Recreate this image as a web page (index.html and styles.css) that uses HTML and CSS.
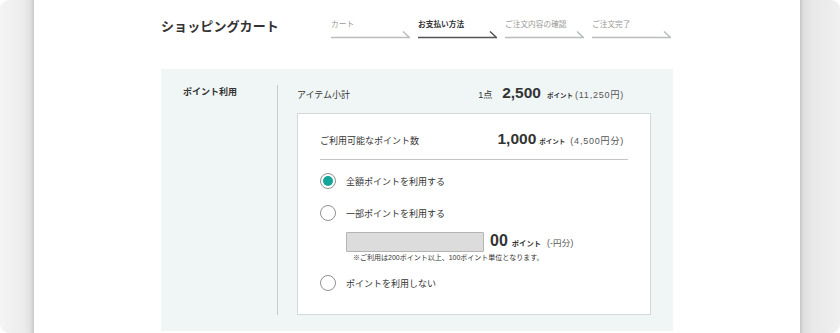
FILE: index.html
```html
<!DOCTYPE html>
<html lang="ja">
<head>
  <meta charset="UTF-8">
  <title>ショッピングカート</title>
  <meta name="viewport" content="width=device-width, initial-scale=1.0">
  <link rel="stylesheet" href="styles.css">
</head>
<body>
  <div class="frame">
    <div class="edge edge-left"></div>

    <main class="page">
      <header class="cart-header">
        <h1 class="cart-title">ショッピングカート</h1>
        <ol class="steps">
          <li class="step">
            <span>カート</span>
            <svg width="79" height="8" viewBox="0 0 79 8"><polyline points="0,6.5 78.5,6.5 72,0.5" /></svg>
          </li>
          <li class="step active">
            <span>お支払い方法</span>
            <svg width="79" height="8" viewBox="0 0 79 8"><polyline points="0,6.5 78.5,6.5 72,0.5" /></svg>
          </li>
          <li class="step">
            <span>ご注文内容の確認</span>
            <svg width="79" height="8" viewBox="0 0 79 8"><polyline points="0,6.5 78.5,6.5 72,0.5" /></svg>
          </li>
          <li class="step">
            <span>ご注文完了</span>
            <svg width="79" height="8" viewBox="0 0 79 8"><polyline points="0,6.5 78.5,6.5 72,0.5" /></svg>
          </li>
        </ol>
      </header>

      <section class="point-panel">
        <h2 class="point-label">ポイント利用</h2>
        <div class="point-body">
          <div class="subtotal">
            <span>アイテム小計</span>
            <span class="amount">
              <span class="count">1点</span>
              <span class="num">2,500</span>
              <span class="unit">ポイント</span>
              <span class="yen">(11,250円)</span>
            </span>
          </div>

          <div class="point-box">
            <div class="available">
              <span>ご利用可能なポイント数</span>
              <span class="amount">
                <span class="num">1,000</span>
                <span class="unit">ポイント</span>
                <span class="yen">(4,500円分)</span>
              </span>
            </div>

            <div class="options">
              <label class="option">
                <span class="radio checked"></span>
                全額ポイントを利用する
              </label>
              <label class="option">
                <span class="radio"></span>
                一部ポイントを利用する
              </label>
              <div class="partial">
                <div class="partial-row">
                  <input class="point-input" type="text">
                  <span class="num">00</span>
                  <span class="unit">ポイント</span>
                  <span class="yen">(-円分)</span>
                </div>
                <p class="note">※ご利用は200ポイント以上、100ポイント単位となります。</p>
              </div>
              <label class="option">
                <span class="radio"></span>
                ポイントを利用しない
              </label>
            </div>
          </div>
        </div>
      </section>
    </main>

    <div class="edge edge-right"></div>
  </div>
</body>
</html>
```

FILE: styles.css
```css
:root {
  --text: #333;
  --muted: #999;
  --panel: #f0f6f6;
  --line: #c9cccc;
  --teal: #13a59a;
}

* {
  box-sizing: border-box;
}

body {
  margin: 0;
  background: #fff;
  color: var(--text);
  font-family: "Liberation Sans", "Noto Sans CJK JP", sans-serif;
}

.frame {
  display: flex;
  height: 333px;
  overflow: hidden;
}

.edge {
  height: 333px;
}

.edge-left {
  width: 34px;
  border-radius: 9px 0 0 9px;
  background: linear-gradient(to right, #f4f4f4 0%, #ececec 70%, #e2e2e2 88%, #c9c9c9 100%);
}

.edge-right {
  width: 40px;
  border-radius: 0 9px 9px 0;
  background: linear-gradient(to right, #c4c4c4 0%, #dedede 8%, #e8e8e8 30%, #f0f0f0 100%);
}

.page {
  flex: 1;
  padding-left: 127px;
}

/* header */

.cart-header {
  display: flex;
  height: 69px;
}

.cart-title {
  width: 170px;
  margin: 17px 0 0;
  font-size: 13px;
  line-height: 20px;
  font-weight: bold;
  letter-spacing: 0.1px;
}

.steps {
  display: flex;
  gap: 8px;
  margin: 19px 0 0;
  padding: 0;
  list-style: none;
}

.step {
  display: flex;
  flex-direction: column;
  width: 79px;
  font-size: 7.7px;
  line-height: 12px;
  color: var(--muted);
}

.step svg {
  display: block;
}

.step polyline {
  fill: none;
  stroke: #b9bdbd;
  stroke-width: 1.5;
}

.step.active {
  color: var(--text);
  font-weight: bold;
}

.step.active polyline {
  stroke: #555;
}

/* point panel */

.point-panel {
  display: flex;
  width: 512px;
  height: 262px;
  padding: 16px 22px 16px 0;
  background: var(--panel);
}

.point-label {
  width: 116px;
  margin: 0;
  padding: 1px 0 0 22px;
  font-size: 9px;
  line-height: 12px;
  font-weight: bold;
}

.point-body {
  flex: 1;
  padding-left: 19px;
  border-left: 1px solid var(--line);
}

.subtotal {
  display: flex;
  justify-content: space-between;
  align-items: baseline;
  height: 28px;
  font-size: 9px;
  line-height: 16px;
  padding-right: 27px;
}

.amount {
  display: flex;
  align-items: baseline;
}

.count {
  font-size: 9px;
  margin-right: 10px;
}

.num {
  font-size: 15.5px;
  font-weight: bold;
  margin-right: 6px;
}

.unit {
  font-size: 6.5px;
  font-weight: bold;
  margin-right: 2px;
}

.yen {
  font-size: 9px;
  letter-spacing: 0.8px;
  color: #555;
}

.point-box {
  height: 202px;
  padding: 0 22px;
  background: #fff;
  border: 1px solid #d5d8d8;
}

.available {
  display: flex;
  justify-content: space-between;
  align-items: baseline;
  padding: 16px 4px 8px 0;
  font-size: 9px;
  line-height: 18px;
  border-bottom: 1px solid #c4c6c6;
}

.available .num {
  margin-right: 3px;
}

.available .unit {
  margin-right: 5px;
}

.options {
  display: flex;
  flex-direction: column;
  padding-top: 13px;
}

.option {
  display: flex;
  align-items: center;
  gap: 10px;
  height: 16px;
  font-size: 9px;
  margin-bottom: 16px;
}

.radio {
  width: 16px;
  height: 16px;
  border: 1px solid #8f9191;
  border-radius: 50%;
  background: #fff;
  display: flex;
  align-items: center;
  justify-content: center;
}

.radio.checked::after {
  content: "";
  width: 10px;
  height: 10px;
  border-radius: 50%;
  background: var(--teal);
}

.partial {
  margin: -5px 0 12px 26px;
}

.partial-row {
  display: flex;
  align-items: baseline;
}

.point-input {
  width: 138px;
  height: 20px;
  margin: 0 6px 0 0;
  padding: 0;
  background: #dcdcdc;
  border: 1px solid #b3b3b3;
  border-radius: 1px;
  align-self: center;
}

.partial-row .num {
  font-size: 16px;
  margin-right: 4px;
}

.partial-row .unit {
  font-size: 7.3px;
  margin-right: 6px;
}

.partial-row .yen {
  font-size: 8.5px;
  letter-spacing: 0.2px;
}

.note {
  margin: 1px 0 0 7px;
  font-size: 7px;
  line-height: 10px;
}

.options .option:last-child {
  margin-bottom: 0;
}
```
